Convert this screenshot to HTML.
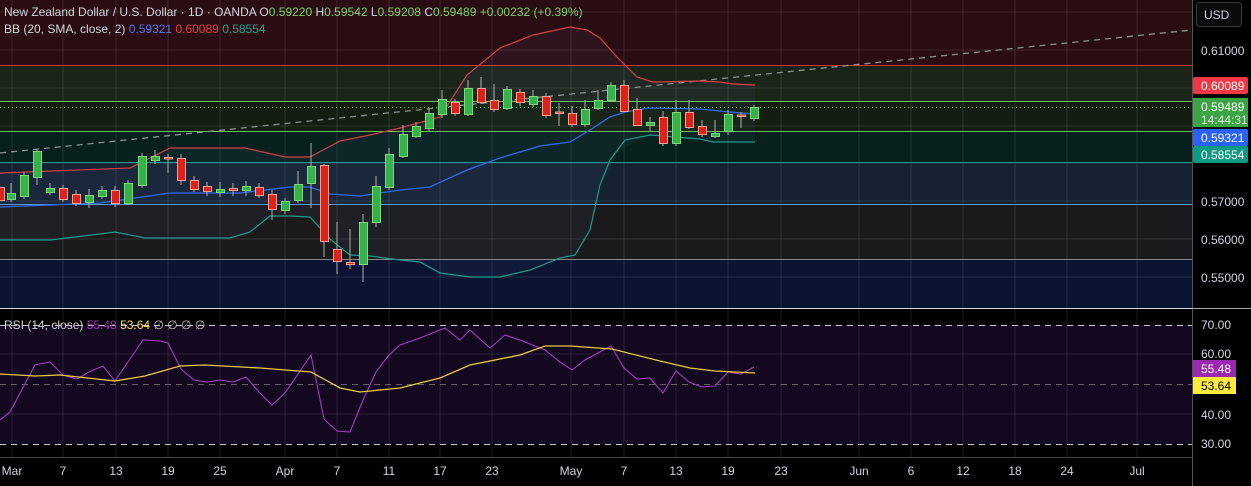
<!DOCTYPE html>
<html><head><meta charset="utf-8"><style>
html,body{margin:0;padding:0;background:#000;width:1251px;height:486px;overflow:hidden;font-family:"Liberation Sans",sans-serif}
svg{display:block}
text{font-family:"Liberation Sans",sans-serif;font-size:12px}
</style></head><body>
<svg width="1251" height="486" viewBox="0 0 1251 486">
<!-- main pane bands -->
<rect x="0" y="0" width="1192" height="65" fill="#2a0d12"/>
<rect x="0" y="65" width="1192" height="36" fill="#1b2419"/>
<rect x="0" y="101" width="1192" height="30" fill="#121f10"/>
<rect x="0" y="131" width="1192" height="31" fill="#07201d"/>
<rect x="0" y="162" width="1192" height="42" fill="#142232"/>
<rect x="0" y="204" width="1192" height="55" fill="#1a1a1c"/>
<rect x="0" y="259" width="1192" height="49" fill="#0a1432"/>
<!-- RSI zone -->
<rect x="0" y="325" width="1192" height="119" fill="#130820"/>
<!-- grid -->
<g stroke="rgba(255,255,255,0.10)" stroke-width="1">
<path d="M0 12H1192M0 50H1192M0 88H1192M0 126H1192M0 163H1192M0 201H1192M0 239H1192M0 277H1192M0 354H1192M0 414H1192"/>
<path d="M12 0V457M63 0V457M116 0V457M168 0V457M220 0V457M285 0V457M337 0V457M389 0V457M440 0V457M492 0V457M571 0V457M624 0V457M676 0V457M728 0V457M781 0V457M859 0V457M911 0V457M963 0V457M1015 0V457M1067 0V457M1137 0V457"/>
</g>
<!-- zone lines -->
<path d="M0 65.5H1192" stroke="#d0343a"/>
<path d="M0 101.5H1192" stroke="#6fbf63"/>
<path d="M0 131.5H1192" stroke="#6fbf63"/>
<path d="M0 162.5H1192" stroke="#1f9a8f"/>
<path d="M0 204.5H1192" stroke="#5a9be0"/>
<path d="M0 259.5H1192" stroke="#8a8a8a"/>
<path d="M0 308.5H1192" stroke="#d8d8d8"/>
<path d="M0 107.5H1192" stroke="#5fbf55" stroke-dasharray="1 3"/>
<!-- trend -->
<path d="M0 153L1192 30" stroke="#8a8f90" stroke-width="1.3" stroke-dasharray="6 5"/>
<!-- BB fill -->
<path d="M0 173L130 168L170 148L245 148L285 157L310 157L340 141L370 135L400 128L440 117L467 75L500 48L533 35L570 27L587 30L600 38L617 57L637 77L653 82L700 81L720 82L733 84L755 85L755 142L713 142L700 139L650 135L620 150L600 185L590 230L575 255L560 258L500 277L440 277L420 262L400 260L370 256L350 255L330 239L310 217L290 216L270 216L250 232L230 238L145 238L115 232L100 234L50 240L0 240Z" fill="rgba(120,140,200,0.06)"/>
<path d="M0 173L130 168L170 148L245 148L285 157L310 157L340 141L370 135L400 128L440 117L467 75L500 48L533 35L570 27L587 30L600 38L617 57L637 77L653 82L700 81L720 82L733 84L755 85" fill="none" stroke="#d0404a" stroke-width="1.2"/>
<path d="M0 207L100 203L170 193L240 193L290 187L310 187L330 194L360 196L400 190L430 187L467 170L500 158L540 146L570 142L590 130L610 117L625 112L650 108L700 109L730 112L755 114" fill="none" stroke="#2f6ae8" stroke-width="1.3"/>
<path d="M0 240L50 240L100 234L115 232L145 238L230 238L250 232L270 216L290 216L310 217L330 239L350 255L370 256L400 260L420 262L440 273L470 277L500 277L530 270L560 258L575 255L590 230L600 185L610 160L625 140L650 135L700 139L713 142L755 142" fill="none" stroke="#1d9a8a" stroke-width="1.2"/>
<!-- candles -->
<g id="c">
<g stroke="#b0b0b0" stroke-width="1">
<path d="M11 183V202M24 172V199M37 149V185M50 183V195M63 185V202M76 190V206M89 189V208M102 186V199M115 186V207M128 180V205M142 153V188M155 150V164M168 154V173M181 154V185M194 176V192M207 182V196M220 182V197M233 183V196M246 181V196M259 183V198M272 190V220M285 198V214M298 171V203M311 143V208M324 164V257M337 222V274M350 229V269M363 214V282M376 176V227M389 148V190M403 125V158M416 122V138M429 109V131M442 90V118M455 99V116M468 80V116M481 77V104M494 84V112M507 86V110M520 89V106M533 90V107M546 93V118M559 103V126M572 106V127M585 100V127M598 90V110M611 82V102M624 80V112M637 98V126M650 117V131M663 111V146M676 100V146M689 100V129M702 120V137M715 120V138M728 110V135M741 112V128M754 105V121"/>
</g>
<g fill="#36b04a" stroke="#7fd878" stroke-width="1">
<rect x="7.5" y="193.5" width="8" height="6"/>
<rect x="20.5" y="175.5" width="8" height="21"/>
<rect x="33.5" y="151.5" width="8" height="26"/>
<rect x="46.5" y="188.5" width="8" height="4"/>
<rect x="85.5" y="195.5" width="8" height="7"/>
<rect x="98.5" y="190.5" width="8" height="6"/>
<rect x="124.5" y="183.5" width="8" height="20"/>
<rect x="138.5" y="156.5" width="8" height="29"/>
<rect x="151.5" y="156.5" width="8" height="4"/>
<rect x="216.5" y="189.5" width="8" height="3"/>
<rect x="242.5" y="186.5" width="8" height="4"/>
<rect x="281.5" y="201.5" width="8" height="9"/>
<rect x="294.5" y="184.5" width="8" height="16"/>
<rect x="307.5" y="166.5" width="8" height="17"/>
<rect x="359.5" y="222.5" width="8" height="42"/>
<rect x="372.5" y="186.5" width="8" height="36"/>
<rect x="385.5" y="154.5" width="8" height="33"/>
<rect x="399.5" y="134.5" width="8" height="22"/>
<rect x="412.5" y="126.5" width="8" height="10"/>
<rect x="425.5" y="113.5" width="8" height="15"/>
<rect x="438.5" y="99.5" width="8" height="15"/>
<rect x="464.5" y="88.5" width="8" height="26"/>
<rect x="503.5" y="89.5" width="8" height="19"/>
<rect x="529.5" y="96.5" width="8" height="8"/>
<rect x="581.5" y="109.5" width="8" height="15"/>
<rect x="594.5" y="100.5" width="8" height="8"/>
<rect x="607.5" y="85.5" width="8" height="15"/>
<rect x="646.5" y="122.5" width="8" height="3"/>
<rect x="672.5" y="112.5" width="8" height="31"/>
<rect x="711.5" y="133.5" width="8" height="3"/>
<rect x="724.5" y="114.5" width="8" height="17"/>
<rect x="750.5" y="107.5" width="8" height="11"/>
</g>
<g fill="#dd2219" stroke="#f4a090" stroke-width="1">
<rect x="-3.5" y="187.5" width="8" height="13"/>
<rect x="59.5" y="188.5" width="8" height="11"/>
<rect x="72.5" y="194.5" width="8" height="9"/>
<rect x="111.5" y="190.5" width="8" height="13"/>
<rect x="164.5" y="157.5" width="8" height="1.5"/>
<rect x="177.5" y="158.5" width="8" height="22"/>
<rect x="190.5" y="180.5" width="8" height="9"/>
<rect x="203.5" y="186.5" width="8" height="5"/>
<rect x="229.5" y="188.5" width="8" height="2"/>
<rect x="255.5" y="187.5" width="8" height="8"/>
<rect x="268.5" y="194.5" width="8" height="15"/>
<rect x="320.5" y="165.5" width="8" height="76"/>
<rect x="333.5" y="249.5" width="8" height="12"/>
<rect x="346.5" y="262.5" width="8" height="2"/>
<rect x="451.5" y="102.5" width="8" height="11"/>
<rect x="477.5" y="88.5" width="8" height="14"/>
<rect x="490.5" y="100.5" width="8" height="9"/>
<rect x="516.5" y="92.5" width="8" height="10"/>
<rect x="542.5" y="96.5" width="8" height="19"/>
<rect x="555.5" y="112" width="8" height="1.5"/>
<rect x="568.5" y="113.5" width="8" height="11"/>
<rect x="620.5" y="85.5" width="8" height="26"/>
<rect x="633.5" y="109.5" width="8" height="16"/>
<rect x="659.5" y="117.5" width="8" height="26"/>
<rect x="685.5" y="112.5" width="8" height="15"/>
<rect x="698.5" y="126.5" width="8" height="8"/>
<rect x="737.5" y="115" width="8" height="1.5"/>
</g>
</g>
<!-- RSI -->
<path d="M0 325.5H1192M0 444.5H1192" stroke="#c8c8c8" stroke-dasharray="6 5"/>
<path d="M0 384.5H1192" stroke="rgba(200,200,200,0.45)" stroke-dasharray="6 5"/>
<path d="M0 420L10 412L35 365L50 362L63 375L77 379L89 372L103 366L115 381L143 340L160 341L168 343L181 369L194 380L207 382L220 380L233 382L246 377L259 392L272 405L285 393L311 355L324 419L337 431L350 432L363 400L376 372L389 355L400 345L420 338L440 330L445 328L460 340L470 330L490 348L505 335L520 340L545 350L560 362L572 370L585 360L598 353L611 346L624 368L637 379L650 378L663 393L676 371L689 382L702 387L715 386L728 372L741 374L754 367" fill="none" stroke="#a13cc0" stroke-width="1.1"/>
<path d="M0 374L35 376L60 375L115 381L145 376L180 366L205 365L260 368L311 372L340 388L360 392L400 388L440 378L470 365L520 355L545 346L570 346L612 349L660 361L690 368L715 371L755 373" fill="none" stroke="#e8c840" stroke-width="1.3"/>
<!-- time axis -->
<path d="M0 457.5H1192" stroke="#444"/>
<g fill="#d1d4dc" text-anchor="middle" font-size="12">
<text x="12" y="475">Mar</text><text x="63" y="475">7</text><text x="116" y="475">13</text><text x="168" y="475">19</text><text x="220" y="475">25</text><text x="285" y="475">Apr</text><text x="337" y="475">7</text><text x="389" y="475">11</text><text x="440" y="475">17</text><text x="492" y="475">23</text><text x="571" y="475">May</text><text x="624" y="475">7</text><text x="676" y="475">13</text><text x="728" y="475">19</text><text x="781" y="475">23</text><text x="859" y="475">Jun</text><text x="911" y="475">6</text><text x="963" y="475">12</text><text x="1015" y="475">18</text><text x="1067" y="475">24</text><text x="1137" y="475">Jul</text>
</g>
<!-- right axis -->
<rect x="1192" y="0" width="59" height="486" fill="#000"/>
<path d="M1192.5 0V486" stroke="#555"/>
<path d="M1192 308.5H1251" stroke="#aaa"/>
<rect x="1196.5" y="2.5" width="45" height="24" rx="3" fill="#0b0b0b" stroke="#3a3a3a"/>
<text x="1204" y="19" fill="#d1d4dc">USD</text>
<g fill="#d1d4dc" font-size="12">
<text x="1201" y="55">0.61000</text>
<text x="1201" y="206">0.57000</text>
<text x="1201" y="244">0.56000</text>
<text x="1201" y="282">0.55000</text>
<text x="1201" y="329">70.00</text>
<text x="1201" y="358">60.00</text>
<text x="1201" y="419">40.00</text>
<text x="1201" y="448">30.00</text>
</g>
<rect x="1193" y="77" width="55" height="17" rx="2" fill="#f23645"/>
<text x="1201" y="90" fill="#fff">0.60089</text>
<rect x="1193" y="98" width="55" height="29" fill="#3ba544"/>
<text x="1201" y="111" fill="#fff">0.59489</text>
<text x="1201" y="124" fill="#d8f0d8">14:44:31</text>
<rect x="1193" y="129" width="55" height="17" rx="2" fill="#2962ff"/>
<text x="1201" y="142" fill="#fff">0.59321</text>
<rect x="1193" y="146" width="55" height="17" rx="2" fill="#0b9a83"/>
<text x="1201" y="159" fill="#fff">0.58554</text>
<rect x="1193" y="360" width="43" height="17" fill="#9c27b0"/>
<text x="1201" y="373" fill="#fff">55.48</text>
<rect x="1193" y="377" width="43" height="17" fill="#ffeb3b"/>
<text x="1201" y="390" fill="#000">53.64</text>
<!-- legends -->
<text x="4" y="16" fill="#d1d4dc">New Zealand Dollar / U.S. Dollar · 1D · OANDA <tspan fill="#d1d4dc">O</tspan><tspan fill="#7fd06a">0.59220</tspan> <tspan fill="#d1d4dc">H</tspan><tspan fill="#7fd06a">0.59542</tspan> <tspan fill="#d1d4dc">L</tspan><tspan fill="#7fd06a">0.59208</tspan> <tspan fill="#d1d4dc">C</tspan><tspan fill="#7fd06a">0.59489</tspan> <tspan fill="#7fd06a">+0.00232 (+0.39%)</tspan></text>
<text x="4" y="33" fill="#d1d4dc">BB (20, SMA, close, 2) <tspan fill="#4f74e0">0.59321</tspan> <tspan fill="#e0404a">0.60089</tspan> <tspan fill="#22a090">0.58554</tspan></text>
<text x="4" y="329" fill="#d1d4dc">RSI (14, close) <tspan fill="#9c3ab8">55.48</tspan> <tspan fill="#ffe04a">53.64</tspan> <tspan fill="#c0c0c0">∅ ∅ ∅ ∅</tspan></text>
</svg>
</body></html>
